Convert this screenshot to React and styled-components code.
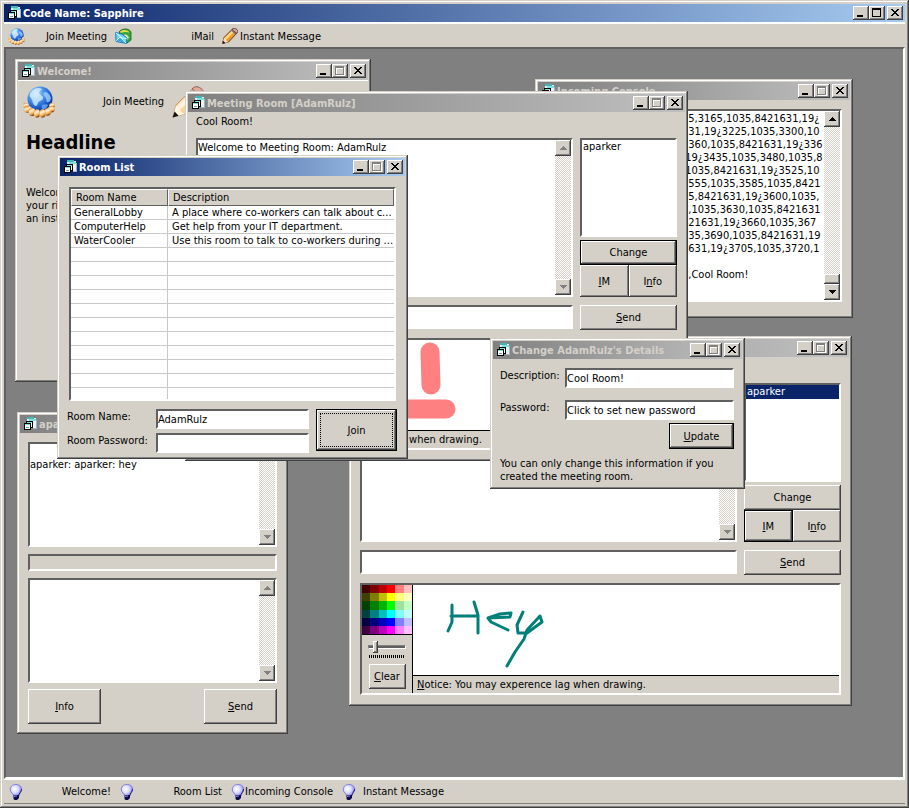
import React from "react";
import styled, { createGlobalStyle, css } from "styled-components";

const FACE = "#d4d0c8";
const NAVY = "#0a246a";

const SWATCHES = [
  ["#400000", "#800000", "#c00000", "#ff0000", "#ff8080", "#ffc0c0"],
  ["#404000", "#808000", "#c0c000", "#ffff00", "#ffff80", "#ffffc0"],
  ["#004000", "#008000", "#00b400", "#00ff00", "#a0e0a0", "#c0ffc0"],
  ["#004040", "#008080", "#00c0c0", "#00ffff", "#80ffff", "#c0ffff"],
  ["#000040", "#000080", "#0000c0", "#0000ff", "#8080ff", "#c0c0ff"],
  ["#400040", "#800080", "#c000c0", "#ff00ff", "#ff80ff", "#ffc0ff"],
];

const ROOMS = [
  ["GeneralLobby", "A place where co-workers can talk about c..."],
  ["ComputerHelp", "Get help from your IT department."],
  ["WaterCooler", "Use this room to talk to co-workers during ..."],
];

const CONSOLE_LOG = `35,3165,1035,8421631,19¿
631,19¿3225,1035,3300,10
3360,1035,8421631,19¿336
,19¿3435,1035,3480,1035,8
,1035,8421631,19¿3525,10
3555,1035,3585,1035,8421
35,8421631,19¿3600,1035,
5,1035,3630,1035,8421631
421631,19¿3660,1035,367
035,3690,1035,8421631,19
1631,19¿3705,1035,3720,1

d,Cool Room!`;

// --------------- icons ------------------

const FormIcon = () => (
  <svg width="16" height="16" viewBox="0 0 16 16" shapeRendering="crispEdges">
    <path d="M5 1h7v1h2v2h1v9h-4v-1H5z" fill="#e6f2f6" />
    <path d="M5 1h7v2H5z" fill="#48b4b4" />
    <path d="M7 3h7v2H7z" fill="#7fe0e0" />
    <path d="M14 4h1v9h-4v-1h3z" fill="#a4b4c4" />
    <path d="M4 5h7v7H9v2H2V7h2z" fill="#fff" />
    <path d="M4 5h7v2H4zM2 7h7v2H2z" fill="#000" />
    <path d="M5 6h5v1H5zM3 8h5v1H3z" fill="#7fe0e0" />
    <path d="M4 5h1v2H4zM10 5h1v7H9v-1h1zM2 7h1v7H2zM8 7h1v7H8zM2 13h7v1H2z" fill="#000" />
    <path d="M4 11h3v1H4z" fill="#48b4b4" />
  </svg>
);

const GlobeIcon = ({ size }) => (
  <svg width={size} height={size} viewBox="0 0 32 32">
    <defs>
      <radialGradient id="globe" cx="0.34" cy="0.28" r="0.8">
        <stop offset="0" stopColor="#e8f6ff" />
        <stop offset="0.3" stopColor="#5fa8f0" />
        <stop offset="0.7" stopColor="#1a5cd0" />
        <stop offset="1" stopColor="#082a80" />
      </radialGradient>
      <linearGradient id="finger" x1="0" y1="0" x2="0.4" y2="1">
        <stop offset="0" stopColor="#e88a34" />
        <stop offset="0.45" stopColor="#fff0cc" />
        <stop offset="0.8" stopColor="#f4a850" />
        <stop offset="1" stopColor="#8c4414" />
      </linearGradient>
    </defs>
    <circle cx="17" cy="13" r="12.5" fill="url(#globe)" />
    <path
      d="M8 6c3-4 8-5 11-3-1 2-3 2-3 4s4 2 4 5-4 2-5 5-2 4-4 2-1-5-3-7-2-4 0-6z"
      fill="#d4ecff"
      opacity="0.8"
    />
    <path d="M22 6c3 0 5 3 6 6-1 4-3 5-4 4s0-3-2-5-2-4 0-5z" fill="#a8d4fc" opacity="0.75" />
    <path d="M19 19c2-1 5-1 6 0-1 3-3 4-5 5-1-1-2-3-1-5z" fill="#7db8f4" opacity="0.7" />
    <g fill="url(#finger)" stroke="#b4602044" strokeWidth="0.6">
      <ellipse cx="3" cy="19.500" rx="3" ry="2.400" />
      <ellipse cx="29" cy="19.500" rx="2.800" ry="2.600" />
      <ellipse cx="5" cy="23.500" rx="4" ry="3.200" />
      <ellipse cx="28" cy="23.500" rx="3.600" ry="3" />
      <ellipse cx="9" cy="26" rx="3.400" ry="4" />
      <ellipse cx="24.500" cy="26" rx="3.200" ry="3.800" />
      <ellipse cx="14" cy="27.500" rx="3" ry="4.200" />
      <ellipse cx="19.500" cy="27.500" rx="3" ry="4.200" />
    </g>
  </svg>
);

const MailIcon = () => (
  <svg width="17" height="16" viewBox="0 0 17 16">
    <path d="M4 4c3-4 10-4 12 0v8l-4 3-3-6z" fill="#3aa63a" stroke="#145c1c" strokeWidth="0.8" />
    <path d="M5 3.500c3-2.500 8-2 9.500 1C12 3.500 8 4 6 5z" fill="#e8dc48" />
    <path d="M8 7c3-1.500 5 0 5 2l1.500-.5-2.500 4-3-3 1.500-.2C10.500 8.500 9.500 8 8 8.500z" fill="#d8f4b8" />
    <path d="M0.700 4.500L7 6l5 4-.5 5.500L1 13.500z" fill="#6cd0f0" stroke="#1470a4" strokeWidth="0.9" />
    <path d="M1 5l6 5 4.500.5M1 13.300L5 9l6 6" fill="none" stroke="#e4faff" strokeWidth="1" />
    <path d="M1.500 13L5 9.500l5.500 5.300z" fill="#38a8dc" />
  </svg>
);

const PencilIcon = ({ size, pale }) => (
  <svg width={size} height={size} viewBox="0 0 16 16">
    <path
      d="M0.500 15.500L2 9.500 10.500 1l4.500 4-8.500 9z"
      fill={pale ? "#fbd09a" : "#f09a2c"}
      stroke={pale ? "#b88a60" : "#5a2b06"}
      strokeWidth={pale ? 0.4 : 0.9}
    />
    <path d="M2.500 10L11 1.800l1.600 1.400L4.400 11.600z" fill={pale ? "#fff2dc" : "#ffd884"} />
    <path d="M0.500 15.500L2 9.800l2 1.400.6 1.800 1.900 1z" fill={pale ? "#fff4e0" : "#fbe3bd"} />
    <path d="M0.300 15.700l1-3 2 2.200z" fill="#111" />
    <path
      d="M10 1.500C11.500-.3 13.500.2 15 1.700c1.200 1.300 1 2.600-.2 3.600z"
      fill="#e4a79c"
      stroke={pale ? "#8c5c54" : "#4a2320"}
      strokeWidth={pale ? 0.5 : 0.8}
    />
    <path d="M9.500 2.200l4.600 4" stroke={pale ? "#a8b8c4" : "#5c7890"} strokeWidth="1.300" />
  </svg>
);

const BulbIcon = () => (
  <svg width="14" height="16" viewBox="0 0 14 16">
    <defs>
      <radialGradient id="bulb" cx="0.38" cy="0.4" r="0.65">
        <stop offset="0" stopColor="#fff" />
        <stop offset="0.5" stopColor="#dcdcff" />
        <stop offset="1" stopColor="#7d7df0" />
      </radialGradient>
    </defs>
    <path
      d="M7 0.500c4 0 6 2.500 5.600 5.500-.3 2.500-2.600 3.500-3 6H4.600c-.3-2.500-3-3.500-3.300-6C1 3 3.200.5 7 .5z"
      fill="url(#bulb)"
      stroke="#7070d8"
      strokeWidth="0.800"
    />
    <path d="M12.500 5c0 3-2.500 4-2.900 7" stroke="#20207c" fill="none" />
    <path d="M4.500 11.500l5.500-.5v3L8 16H5.500L4.500 15z" fill="#0c0c4c" />
    <path d="M5 12.500l3-.5" stroke="#8484e8" />
  </svg>
);

const Arrow = ({ up, dim }) => (
  <svg width="7" height="4" viewBox="0 0 7 4" shapeRendering="crispEdges">
    <path
      d={up ? "M3 0h1v1h1v1h1v1h1v1H0V3h1V2h1V1h1z" : "M0 0h7v1H6v1H5v1H4v1H3V3H2V2H1V1H0z"}
      fill={dim ? "#808080" : "#000"}
    />
  </svg>
);

const MinIcon = () => (
  <svg width="12" height="10" viewBox="0 0 12 10" shapeRendering="crispEdges">
    <path d="M2 7h6v2H2z" />
  </svg>
);

const MaxIcon = ({ dim }) => (
  <svg width="12" height="10" viewBox="0 0 12 10" shapeRendering="crispEdges">
    {dim && <path d="M2 1h9v9H2zM3 3v6h7V3z" fill="#fff" fillRule="evenodd" />}
    <path d="M1 0h9v9H1zM2 2v6h7V2z" fill={dim ? "#808080" : "#000"} fillRule="evenodd" />
  </svg>
);

const CloseIcon = () => (
  <svg width="12" height="10" viewBox="0 0 12 10" shapeRendering="crispEdges">
    <path d="M2 1h2v1h1v1h2V2h1V1h2v1H9v1H8v1H7v1h1v1h1v1h1v1H8V7H7V6H5v1H4v1H2V7h1V6h1V5h1V4H4V3H3V2H2z" />
  </svg>
);

// --------------- shared parts ------------------

function TitleBar({ title, active, canMaximize }) {
  return (
    <StyledTitleBar $active={active}>
      <FormIcon />
      <Title $active={active}>{title}</Title>
      <CaptionButton aria-label="Minimize">
        <MinIcon />
      </CaptionButton>
      <CaptionButton aria-label="Maximize" disabled={!canMaximize}>
        <MaxIcon dim={!canMaximize} />
      </CaptionButton>
      <CaptionButton aria-label="Close" $apart>
        <CloseIcon />
      </CaptionButton>
    </StyledTitleBar>
  );
}

function ChildWindow({ title, active, children, ...place }) {
  return (
    <StyledWindow $x={place.x} $y={place.y} $width={place.width} $height={place.height}>
      <TitleBar title={title} active={active} />
      {children}
    </StyledWindow>
  );
}

function ScrollBar({ enabled }) {
  return (
    <Track>
      <ScrollButton aria-label="Scroll up" disabled={!enabled}>
        <Arrow up dim={!enabled} />
      </ScrollButton>
      <TrackSpace />
      {enabled && <Thumb />}
      <ScrollButton aria-label="Scroll down" disabled={!enabled}>
        <Arrow dim={!enabled} />
      </ScrollButton>
    </Track>
  );
}

function TextBox({ label, text, height, enabled, indent }) {
  return (
    <Sunken $height={height}>
      <Memo aria-label={label} defaultValue={text} $indent={indent} spellCheck={false} />
      <ScrollBar enabled={enabled} />
    </Sunken>
  );
}

function DrawingPad({ children }) {
  return (
    <Pad>
      <PadTools>
        <Palette viewBox="0 0 6 6" preserveAspectRatio="none" shapeRendering="crispEdges">
          {SWATCHES.map((row, y) =>
            row.map((color, x) => <rect key={color} x={x} y={y} width="1" height="1" fill={color} />)
          )}
        </Palette>
        <Slider type="range" min="1" max="15" defaultValue="3" aria-label="Pen width" />
        <Ticks />
        <ClearButton>
          <u>C</u>lear
        </ClearButton>
      </PadTools>
      <PadMain>
        <Drawing>{children}</Drawing>
        <Notice>
          <u>N</u>otice: You may experence lag when drawing.
        </Notice>
      </PadMain>
    </Pad>
  );
}

function RoomWindow({ caption, log, selected, defaultButton, drawing, ...place }) {
  return (
    <ChildWindow {...place}>
      <RoomBody>
        <RoomCaption>{caption}</RoomCaption>
        <RoomGrid>
          <TextBox label="Conversation" text={log} height={159} />
          <RoomSide>
            <ListBox role="listbox" aria-label="People in the room">
              <ListItem role="option" aria-selected={!!selected} $selected={selected}>
                aparker
              </ListItem>
            </ListBox>
            <Button $height={25} $default={defaultButton === "change"}>
              Change
            </Button>
            <ButtonPair>
              <Button $height={32} $default={defaultButton === "im"}>
                <u>I</u>M
              </Button>
              <Button $height={32}>
                I<u>n</u>fo
              </Button>
            </ButtonPair>
          </RoomSide>
          <Field $height={24} aria-label="Message" />
          <Button $height={25}>
            <u>S</u>end
          </Button>
        </RoomGrid>
        <DrawingPad>{drawing}</DrawingPad>
      </RoomBody>
    </ChildWindow>
  );
}

// --------------- windows ------------------

function WelcomeWindow() {
  return (
    <ChildWindow title="Welcome!" x={9} y={10} width={356} height={323}>
      <WelcomeBar>
        <WelcomeItem>
          <GlobeIcon size={32} />
          <span>Join Meeting</span>
        </WelcomeItem>
        <WelcomeItem>
          <PencilIcon size={32} pale />
        </WelcomeItem>
      </WelcomeBar>
      <WelcomeBody>
        <h1>Headline</h1>
        <p>
          Welcome
          <br />
          your ri
          <br />
          an inst
        </p>
      </WelcomeBody>
    </ChildWindow>
  );
}

function ConsoleWindow() {
  return (
    <ChildWindow title="Incoming Console" x={529} y={30} width={318} height={239}>
      <ConsoleBody>
        <TextBox label="Console output" text={CONSOLE_LOG} height={193} indent={134} enabled />
      </ConsoleBody>
    </ChildWindow>
  );
}

function MessageWindow() {
  return (
    <ChildWindow title="aparker" x={11} y={363} width={271} height={322}>
      <MessageBody>
        <TextBox label="Messages" text={"\naparker: aparker: hey"} height={105} />
        <StatusStrip />
        <TextBox label="Reply" text="" height={105} />
        <MessageButtons>
          <Button $height={35}>
            <u>I</u>nfo
          </Button>
          <Button $height={35}>
            <u>S</u>end
          </Button>
        </MessageButtons>
      </MessageBody>
    </ChildWindow>
  );
}

function DetailsWindow() {
  return (
    <ChildWindow title="Change AdamRulz's Details" x={484} y={289} width={255} height={151}>
      <DetailsBody>
        <Label htmlFor="description">Description:</Label>
        <Field id="description" $height={20} defaultValue="Cool Room!" />
        <Label htmlFor="password">Password:</Label>
        <Field id="password" $height={20} defaultValue="Click to set new password" />
      </DetailsBody>
      <DetailsFooter>
        <Button $height={26} $default>
          <u>U</u>pdate
        </Button>
        <p>You can only change this information if you created the meeting room.</p>
      </DetailsFooter>
    </ChildWindow>
  );
}

function RoomListWindow() {
  const blanks = Array.from({ length: 11 }, () => ["", ""]);

  return (
    <ChildWindow title="Room List" active x={51} y={106} width={351} height={304}>
      <RoomListBody>
        <TableFrame>
          <RoomTable>
            <thead>
              <tr>
                <th>Room Name</th>
                <th>Description</th>
              </tr>
            </thead>
            <tbody>
              {ROOMS.concat(blanks).map(([name, description], i) => (
                <tr key={i}>
                  <td>{name}</td>
                  <td>{description}</td>
                </tr>
              ))}
            </tbody>
          </RoomTable>
        </TableFrame>
        <JoinForm>
          <JoinFields>
            <Label htmlFor="room-name">Room Name:</Label>
            <Field id="room-name" $height={20} defaultValue="AdamRulz" />
            <Label htmlFor="room-password">Room Password:</Label>
            <Field id="room-password" $height={20} type="password" />
          </JoinFields>
          <JoinButton $height={42} $default>
            <span>
              <u>J</u>oin
            </span>
          </JoinButton>
        </JoinForm>
      </RoomListBody>
    </ChildWindow>
  );
}

function App() {
  return (
    <>
      <GlobalStyle />
      <Frame>
        <TitleBar title="Code Name: Sapphire" active canMaximize />
        <ToolBar>
          <ToolButton>
            <GlobeIcon size={17} />
            <span>Join Meeting</span>
          </ToolButton>
          <ToolButton>
            <MailIcon />
            <span>iMail</span>
          </ToolButton>
          <ToolButton>
            <PencilIcon size={16} />
            <span>Instant Message</span>
          </ToolButton>
        </ToolBar>

        <Desktop>
          <WelcomeWindow />
          <ConsoleWindow />
          <MessageWindow />
          <RoomWindow
            title="Meeting Room"
            x={343}
            y={287}
            width={503}
            height={370}
            selected
            defaultButton="im"
            drawing={
              <g stroke="#008078" strokeWidth="3">
                <path d="M39 20v17l-4 9M38 31h27M61 17l4 13v18" />
                <path d="M75 33l22-1 1-4-11 1-12 4 3 4 17 8" />
                <path d="M110 27l-6 13 1 8h9l15-11-2-6-13 14-3 9-9 13-8 14" />
              </g>
            }
          />
          <RoomWindow
            title="Meeting Room [AdamRulz]"
            caption="Cool Room!"
            log="Welcome to Meeting Room: AdamRulz"
            x={179}
            y={42}
            width={503}
            height={370}
            defaultButton="change"
            drawing={
              <g stroke="#ff8080" strokeWidth="19">
                <path d="M181 12l1 33M151 69h46" />
              </g>
            }
          />
          <DetailsWindow />
          <RoomListWindow />
        </Desktop>

        <StatusBar>
          {["Welcome!", "Room List", "Incoming Console", "Instant Message"].map((name) => (
            <StatusButton key={name}>
              <BulbIcon />
              <span>{name}</span>
            </StatusButton>
          ))}
        </StatusBar>
      </Frame>
    </>
  );
}

export default App;

// --------------- styles ------------------

const GlobalStyle = createGlobalStyle`
  * {
    box-sizing: border-box;
  }

  body {
    margin: 0;
    background-color: ${FACE};
    color: #000;
  }

  body, button, input, textarea, table {
    font-family: "DejaVu Sans Condensed", "DejaVu Sans", sans-serif;
    font-size: 11px;
    line-height: 13px;
  }

  button, input {
    color: #000;
  }

  svg {
    display: block;
    flex: none;
  }

  p, h1 {
    margin: 0;
  }
`;

const raised = css`
  background-color: ${FACE};
  box-shadow: inset -1px -1px #404040, inset 1px 1px #fff, inset -2px -2px #808080;
`;

const sunken = css`
  border: 2px solid;
  border-color: #606060 #fff #fff #606060;
  background-color: #fff;
`;

const windowEdge = css`
  background-color: ${FACE};
  box-shadow: inset -1px -1px #404040, inset 1px 1px ${FACE}, inset -2px -2px #808080,
    inset 2px 2px #fff;
`;

const Frame = styled.main`
  ${windowEdge}
  height: 100vh;
  padding: 4px;
  display: flex;
  flex-direction: column;
`;

const StyledWindow = styled.section`
  ${windowEdge}
  position: absolute;
  left: ${({ $x }) => $x}px;
  top: ${({ $y }) => $y}px;
  width: ${({ $width }) => $width}px;
  height: ${({ $height }) => $height}px;
  padding: 3px;
  overflow: hidden;
`;

const StyledTitleBar = styled.header`
  height: 18px;
  flex: none;
  padding: 0 2px;
  display: flex;
  align-items: center;
  background: ${({ $active }) =>
    $active
      ? `linear-gradient(90deg, ${NAVY}, #a6caf0)`
      : "linear-gradient(90deg, #808080, #c0c0c0)"};
`;

const Title = styled.span`
  flex: 1;
  padding-left: 1px;
  font-weight: bold;
  white-space: nowrap;
  color: ${({ $active }) => ($active ? "#fff" : FACE)};
`;

const CaptionButton = styled.button`
  ${raised}
  width: 16px;
  height: 14px;
  padding: 2px;
  border: none;
  margin-left: ${({ $apart }) => ($apart ? 2 : 0)}px;
`;

const ToolBar = styled.nav`
  height: 25px;
  flex: none;
  padding: 1px 4px 0;
  display: flex;
  gap: 8px;
  align-items: center;
  border-top: 2px solid #fff;
`;

const ToolButton = styled.button`
  width: 99px;
  padding: 0;
  border: none;
  background: none;
  display: flex;
  justify-content: space-between;
  align-items: center;
  white-space: nowrap;
`;

const StatusBar = styled.footer`
  height: 25px;
  flex: none;
  padding: 0 4px;
  display: flex;
  gap: 8px;
  align-items: center;
  border-top: 1px solid #fff;
  border-bottom: 1px solid #808080;
`;

const StatusButton = styled(ToolButton)`
  width: 103px;
  padding-left: 1px;
`;

const Desktop = styled.div`
  ${sunken}
  flex: 1;
  min-height: 0;
  position: relative;
  overflow: hidden;
  background-color: #808080;
`;

const Button = styled.button`
  ${raised}
  height: ${({ $height }) => $height}px;
  padding: 0;
  border: ${({ $default }) => ($default ? "1px solid #000" : "none")};
`;

const Field = styled.input`
  ${sunken}
  width: 100%;
  min-width: 0;
  height: ${({ $height }) => $height}px;
  padding: 0;
  outline: none;
`;

const Label = styled.label`
  padding-top: 1px;
  white-space: nowrap;
`;

const Sunken = styled.div`
  ${sunken}
  height: ${({ $height }) => $height}px;
  display: flex;
`;

const Memo = styled.textarea`
  flex: 1;
  min-width: 0;
  padding: 1px 0 0 ${({ $indent }) => $indent || 0}px;
  border: none;
  outline: none;
  resize: none;
  overflow: hidden;
  white-space: pre;
`;

const Track = styled.div`
  width: 16px;
  display: flex;
  flex-direction: column;
  background: repeating-conic-gradient(#fff 0 25%, ${FACE} 0 50%) 0 0 / 2px 2px;
`;

const ScrollButton = styled.button`
  ${raised}
  height: 16px;
  padding: 0;
  border: none;
  display: flex;
  align-items: center;
  justify-content: center;
`;

const TrackSpace = styled.div`
  flex: 1;
`;

const Thumb = styled.div`
  ${raised}
  height: 10px;
`;

const WelcomeBar = styled.div`
  height: 42px;
  padding: 0 5px;
  display: flex;
  gap: 8px;
  border-top: 1px solid #fff;
`;

const WelcomeItem = styled.div`
  width: 141px;
  display: flex;
  align-items: center;
  justify-content: space-between;
`;

const WelcomeBody = styled.div`
  padding: 6px 8px;

  h1 {
    font-size: 20px;
    line-height: 28px;
    margin-bottom: 30px;
  }
`;

const ConsoleBody = styled.div`
  padding: 9px 8px 0;
`;

const RoomBody = styled.div`
  padding: 0 8px;
`;

const RoomCaption = styled.p`
  height: 26px;
  padding-top: 3px;
`;

const RoomGrid = styled.div`
  display: grid;
  grid-template-columns: 1fr 97px;
  gap: 8px 7px;
`;

const RoomSide = styled.div`
  display: flex;
  flex-direction: column;
  justify-content: space-between;
`;

const ListBox = styled.ul`
  ${sunken}
  height: 99px;
  margin: 0 0 3px;
  padding: 0;
  list-style: none;
`;

const ListItem = styled.li`
  height: 14px;
  padding-left: 1px;
  background-color: ${({ $selected }) => ($selected ? NAVY : "transparent")};
  color: ${({ $selected }) => ($selected ? "#fff" : "#000")};
`;

const ButtonPair = styled.div`
  display: grid;
  grid-template-columns: 1fr 1fr;
`;

const Pad = styled.div`
  ${sunken}
  height: 112px;
  margin-top: 8px;
  display: flex;
  background-color: ${FACE};
`;

const PadTools = styled.div`
  width: 51px;
  border-right: 1px solid #000;
  display: flex;
  flex-direction: column;
  align-items: center;
`;

const Palette = styled.svg`
  width: 50px;
  height: 50px;
  border-bottom: 1px solid #000;
`;

const Slider = styled.input`
  appearance: none;
  width: 38px;
  height: 12px;
  margin: 6px 0 0;
  background: transparent;

  &::-webkit-slider-runnable-track {
    height: 4px;
    border: 1px solid;
    border-color: #808080 #fff #fff #808080;
    background-color: #606060;
  }

  &::-webkit-slider-thumb {
    ${raised}
    appearance: none;
    width: 5px;
    height: 12px;
    margin-top: -5px;
  }
`;

const Ticks = styled.div`
  width: 36px;
  height: 3px;
  margin-top: 2px;
  background: repeating-linear-gradient(90deg, #000 0 1px, transparent 1px 2px);
`;

const ClearButton = styled(Button)`
  width: 37px;
  height: 25px;
  margin-top: 6px;
`;

const PadMain = styled.div`
  flex: 1;
  display: flex;
  flex-direction: column;
`;

const Drawing = styled.svg`
  width: 100%;
  height: 90px;
  background-color: #fff;
  fill: none;
  stroke-linecap: round;
  stroke-linejoin: round;
`;

const Notice = styled.p`
  flex: 1;
  padding: 2px 4px;
  border-top: 1px solid #000;
`;

const MessageBody = styled.div`
  padding: 9px 8px 0;
`;

const StatusStrip = styled.div`
  ${sunken}
  height: 17px;
  margin: 7px 0;
  background-color: ${FACE};
`;

const MessageButtons = styled.div`
  margin-top: 6px;
  display: flex;
  justify-content: space-between;

  > button {
    width: 73px;
  }
`;

const DetailsBody = styled.div`
  padding: 9px 8px 0 7px;
  display: grid;
  grid-template-columns: 58px 1fr;
  gap: 12px 7px;
`;

const DetailsFooter = styled.div`
  padding: 3px 8px 0 7px;
  display: flex;
  flex-direction: column;

  > button {
    width: 65px;
    align-self: flex-end;
    margin-bottom: 8px;
  }
`;

const RoomListBody = styled.div`
  padding: 11px 8px 0 9px;
`;

const TableFrame = styled.div`
  ${sunken}
  height: 214px;
  margin-right: 1px;
  overflow: hidden;
`;

const RoomTable = styled.table`
  width: 100%;
  table-layout: fixed;
  border-collapse: separate;
  border-spacing: 0;

  th {
    height: 17px;
    padding: 0 0 0 4px;
    background-color: ${FACE};
    border: 1px solid;
    border-color: #fff #606060 #606060 #fff;
    font-weight: normal;
    text-align: left;

    &:first-child {
      width: 97px;
    }
  }

  td {
    height: 14px;
    padding: 0 0 0 4px;
    border-bottom: 1px solid #c8c8c8;
    white-space: nowrap;
    overflow: hidden;

    &:first-child {
      padding-left: 3px;
      border-right: 1px solid #c8c8c8;
    }
  }
`;

const JoinForm = styled.div`
  margin-top: 8px;
  display: grid;
  grid-template-columns: 1fr 81px;
  gap: 7px;
`;

const JoinFields = styled.div`
  margin-left: -2px;
  display: grid;
  grid-template-columns: 82px 1fr;
  gap: 4px 7px;
`;

const JoinButton = styled(Button)`
  padding: 3px;

  > span {
    height: 100%;
    display: flex;
    align-items: center;
    justify-content: center;
    border: 1px dotted #000;
  }
`;
